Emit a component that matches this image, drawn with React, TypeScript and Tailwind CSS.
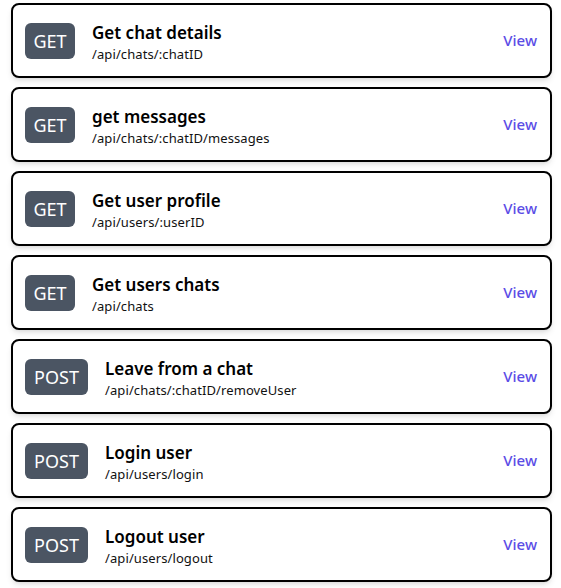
import React from "react";

const items = [
  { m: "GET", t: "Get chat details", p: "/api/chats/:chatID" },
  { m: "GET", t: "get messages", p: "/api/chats/:chatID/messages" },
  { m: "GET", t: "Get user profile", p: "/api/users/:userID" },
  { m: "GET", t: "Get users chats", p: "/api/chats" },
  { m: "POST", t: "Leave from a chat", p: "/api/chats/:chatID/removeUser" },
  { m: "POST", t: "Login user", p: "/api/users/login" },
  { m: "POST", t: "Logout user", p: "/api/users/logout" },
];

export default function App() {
  return (
    <div
      className="bg-white min-h-[588px] pt-[3px] pl-[11px] pr-[9px] flex flex-col gap-[9px]"
      style={{ fontFamily: '"Noto Sans", "Open Sans", sans-serif' }}
    >
      {items.map((it, i) => (
        <div
          key={i}
          className="h-[75px] border-2 border-black rounded-lg shadow-md bg-white flex items-center pl-3 pr-3"
        >
          <div
            className={
              it.m === "GET"
                ? "h-[36px] w-[50px] rounded-md bg-[#4b5563] text-white text-[18px] flex items-center justify-center leading-none"
                : "h-[36px] w-[63px] rounded-md bg-[#4b5563] text-white text-[18px] flex items-center justify-center leading-none"
            }
          >
            {it.m}
          </div>
          <div className="ml-[17px] flex flex-col pt-[5px]">
            <div className="text-[17px] font-semibold text-black leading-[22px]">{it.t}</div>
            <div className="text-[13px] text-[#111] leading-[19px] mt-[1px] tracking-[0.1px]">{it.p}</div>
          </div>
          <div className="ml-auto text-[15px] font-medium text-[#5b4de6] pr-[1px]">View</div>
        </div>
      ))}
    </div>
  );
}
